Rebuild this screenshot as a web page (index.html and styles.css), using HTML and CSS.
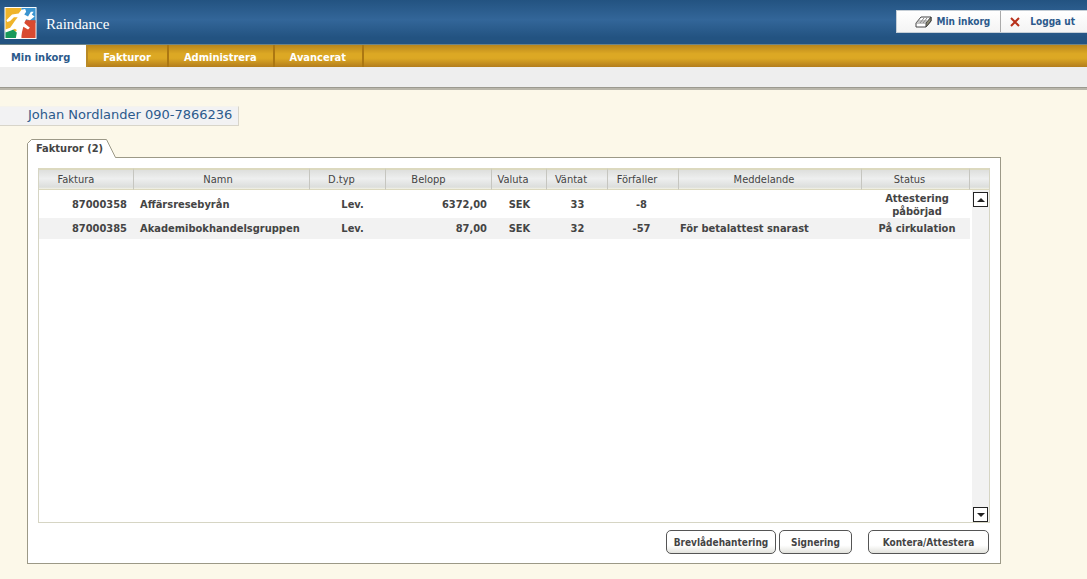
FILE: index.html
```html
<!DOCTYPE html>
<html lang="sv">
<head>
<meta charset="utf-8">
<title>Raindance</title>
<link rel="stylesheet" href="styles.css">
</head>
<body>
<header class="header">
  <div class="brand">
    <svg class="logo" viewBox="0 0 34 34" aria-hidden="true">
      <rect width="34" height="34" fill="#fff"/>
      <path d="M1 1H18V18L12 26H1Z" fill="#efb42b"/>
      <path d="M18 1H33V17H18Z" fill="#3a94d0"/>
      <path d="M18 14H33V33H18Z" fill="#d94a30"/>
      <path d="M1 26L8 23L13 27V33H1Z" fill="#18995a"/>
      <path d="M18 3L22 2L23 5L21 8L25 10L28 5L31 5L29 8L32 10L27 14L23 13L21 17L27 22L25 24L20 21L17 33H12L14 25L11 23L7 25L1 27V24L6 22L11 15L14 11L10 11L6 15L3 16L2 14L8 8L15 7Z" fill="#fff"/>
    </svg>
    <span class="brand-name">Raindance</span>
  </div>
  <div class="quick">
    <a class="quick-link" href="#">
      <svg class="tray-icon" viewBox="0 0 17 12" aria-hidden="true">
        <path d="M1 7L6 1H16V5L11 11H1Z" fill="#fff" stroke="#444"/>
        <path d="M11 7L16 1V5L11 11Z" fill="#8c8a72" stroke="#444"/>
        <path d="M1 7H11M5 7L9 2M8 7L12 2M3 5H12" fill="none" stroke="#888"/>
      </svg>
      Min inkorg</a>
    <a class="quick-link quick-logout" href="#">
      <svg class="cross-icon" viewBox="0 0 10 10" aria-hidden="true"><path d="M1 1L9 9M9 1L1 9" stroke="#b8311b" stroke-width="2"/></svg>
      Logga ut</a>
  </div>
</header>
<nav class="nav">
  <a class="nav-item nav-active" href="#">Min inkorg</a>
  <a class="nav-item" href="#">Fakturor</a>
  <a class="nav-item" href="#">Administrera</a>
  <a class="nav-item" href="#">Avancerat</a>
</nav>
<div class="subbar"></div>
<main class="main">
  <h1 class="user">Johan Nordlander 090-7866236</h1>
  <section class="panel">
    <div class="tab">
      <svg class="tab-shape" viewBox="0 0 90 19" aria-hidden="true"><path d="M.5 19V4.500L4.500 .5H79.500L88.500 18.500H90V19Z" fill="#fff"/><path d="M.5 19V4.500L4.500 .5H79.500L88.500 18.500H90" fill="none" stroke="#9c9987"/></svg>
      <h2 class="tab-label">Fakturor (2)</h2>
    </div>
    <div class="card">
      <div class="list">
        <table class="table">
          <colgroup><col class="c-id"><col class="c-name"><col class="c-type"><col class="c-sum"><col class="c-cur"><col class="c-wait"><col class="c-due"><col><col class="c-status"></colgroup>
          <thead><tr><th>Faktura</th><th>Namn</th><th>D.typ</th><th>Belopp</th><th>Valuta</th><th>Väntat</th><th>Förfaller</th><th>Meddelande</th><th>Status</th></tr></thead>
          <tbody>
            <tr class="row-first"><td class="num">87000358</td><td class="text">Affärsresebyrån</td><td class="type">Lev.</td><td class="num sum">6372,00</td><td>SEK</td><td>33</td><td class="due">-8</td><td class="message"></td><td class="status">Attestering<br>påbörjad</td></tr>
            <tr class="row-alt"><td class="num">87000385</td><td class="text">Akademibokhandelsgruppen</td><td class="type">Lev.</td><td class="num sum">87,00</td><td>SEK</td><td>32</td><td class="due">-57</td><td class="message">För betalattest snarast</td><td class="status">På cirkulation</td></tr>
          </tbody>
        </table>
        <div class="scroll">
          <div class="scroll-head"></div>
          <div class="track">
            <button class="arrow" type="button" aria-label="Upp"><svg viewBox="0 0 8 4" class="arrow-icon"><path d="M0 4L4 0L8 4Z"/></svg></button>
            <button class="arrow" type="button" aria-label="Ned"><svg viewBox="0 0 8 4" class="arrow-icon"><path d="M0 0L4 4L8 0Z"/></svg></button>
          </div>
        </div>
      </div>
      <div class="actions">
        <button class="btn btn-mail" type="button">Brevlådehantering</button>
        <button class="btn btn-sign" type="button">Signering</button>
        <button class="btn btn-attest" type="button">Kontera/Attestera</button>
      </div>
    </div>
  </section>
</main>
</body>
</html>
```
FILE: styles.css
```css
* { box-sizing: border-box; }
body {
  margin: 0;
  background: #fcf8e9;
  color: #444;
  font: 11px/13px "DejaVu Sans Condensed", "DejaVu Sans", sans-serif;
}
a { text-decoration: none; }
h1, h2 { margin: 0; }
button { font: inherit; color: inherit; }

.header {
  display: flex;
  justify-content: space-between;
  height: 45px;
  background: linear-gradient(#235381, #336699 45%, #235381 85%, #235381);
  border-bottom: 1px solid #6d8488;
}
.brand { display: flex; align-items: flex-start; gap: 9px; padding: 7px 0 0 4px; }
.logo { width: 33px; height: 32px; }
.brand-name { color: #fff; font: 15px/34px "Liberation Serif", serif; }
.quick {
  display: flex;
  height: 23px;
  margin-top: 10px;
  background: linear-gradient(#fff, #f4f4f4);
  border: 1px solid #c5ced6;
  border-right: 0;
}
.quick-link {
  display: flex;
  align-items: center;
  gap: 4px;
  padding: 0 10px 0 18px;
  color: #2c5a8c;
  font-size: 10px;
  font-weight: bold;
}
.quick-logout { gap: 10px; border-left: 1px solid #aaa; padding: 0 12px 0 9px; }
.tray-icon { width: 17px; height: 12px; }
.cross-icon { width: 10px; height: 10px; }

.nav {
  display: flex;
  height: 22px;
  background: linear-gradient(#b9861c, #dca824 40%, #dca824 60%, #b37d1d);
}
.nav-item {
  padding: 0 16px 0 15px;
  border-right: 2px solid #ab7712;
  color: #fff;
  font-size: 11px;
  line-height: 26px;
  font-weight: bold;
}
.nav-active { padding: 0 16px 0 11px; background: #fff; color: #2c5a8c; border-color: #b98a26; }
.subbar {
  height: 23px;
  background: #eee;
  border-bottom: 2px solid #b9b6aa;
  box-shadow: inset 0 -1px #9b998f;
}

.main { padding: 16px 86px 15px 0; }
.user {
  width: max-content;
  padding: 0 6px 2px 28px;
  background: #f2f2f3;
  border: 1px solid #d8d5ca;
  border-top-color: #f5f3ec;
  border-left: 0;
  color: #2c5a8c;
  font: 13px/16px "DejaVu Sans", sans-serif;
}
.panel { margin: 13px 0 0 27px; }
.tab { display: grid; width: 90px; height: 19px; position: relative; }
.tab-shape, .tab-label { grid-area: 1 / 1; }
.tab-shape { width: 90px; height: 19px; }
.tab-label { z-index: 1; padding-left: 9px; font-size: 11px; line-height: 20px; white-space: nowrap; }
.card {
  margin-top: -1px;
  padding: 10px 10px 9px 10px;
  background: #fff;
  border: 1px solid #9c9987;
}

.list { display: flex; min-height: 355px; border: 1px solid #d6d5c4; border-top: 0; }
.table { flex: 1; align-self: flex-start; table-layout: fixed; width: 0; border-collapse: separate; border-spacing: 0; }
.c-id { width: 95px; }
.c-name { width: 176px; }
.c-type { width: 76px; }
.c-sum { width: 106px; }
.c-cur { width: 55px; }
.c-wait { width: 61px; }
.c-due { width: 71px; }
.c-status { width: 108px; }
th, .scroll-head {
  height: 22px;
  background: linear-gradient(#dedfdd, #eeefef 45%, #dcdedc 90%, #f4f3e6);
  border-top: 2px solid #dcd9bf;
  border-bottom: 1px solid #dcd9bf;
}
th { padding: 0 12px 0 0; border-right: 1px solid #c6c6c0; font-weight: normal; }
th:nth-child(1), th:nth-child(4) { padding-right: 20px; }
th:nth-child(2) { padding-right: 7px; }
td { padding: 0; height: 21px; text-align: center; font-weight: bold; }
.row-first td { height: 28px; padding-top: 1px; }
.row-alt td { background: #f2f2f2; }
td.num { text-align: right; padding-right: 7px; }
td.sum { padding-right: 5px; }
td.text { text-align: left; padding-left: 6px; }
td.type { padding-left: 9px; }
td.due { padding-right: 4px; }
td.message { text-align: left; padding-left: 1px; }
td.status { padding-left: 2px; }
.scroll { display: flex; flex-direction: column; width: 19px; }
.track {
  flex: 1;
  display: flex;
  flex-direction: column;
  justify-content: space-between;
  margin-left: 2px;
  padding-top: 2px;
  background: #f2f2f2;
}
.arrow {
  display: flex;
  align-items: center;
  justify-content: center;
  width: 15px;
  height: 15px;
  margin-left: 1px;
  padding: 0;
  background: #fff;
  border: 1px solid #222;
}
.arrow-icon { width: 8px; height: 4px; fill: #222; }

.actions { display: flex; justify-content: flex-end; gap: 3px; padding: 7px 1px 0 0; }
.btn {
  height: 24px;
  padding: 0;
  background: linear-gradient(#fff 65%, #e2e2dc);
  border: 1px solid #555;
  border-radius: 5px;
  font-size: 10px;
  font-weight: bold;
}
.btn-mail { width: 110px; }
.btn-sign { width: 73px; }
.btn-attest { width: 121px; margin-left: 13px; }
```
